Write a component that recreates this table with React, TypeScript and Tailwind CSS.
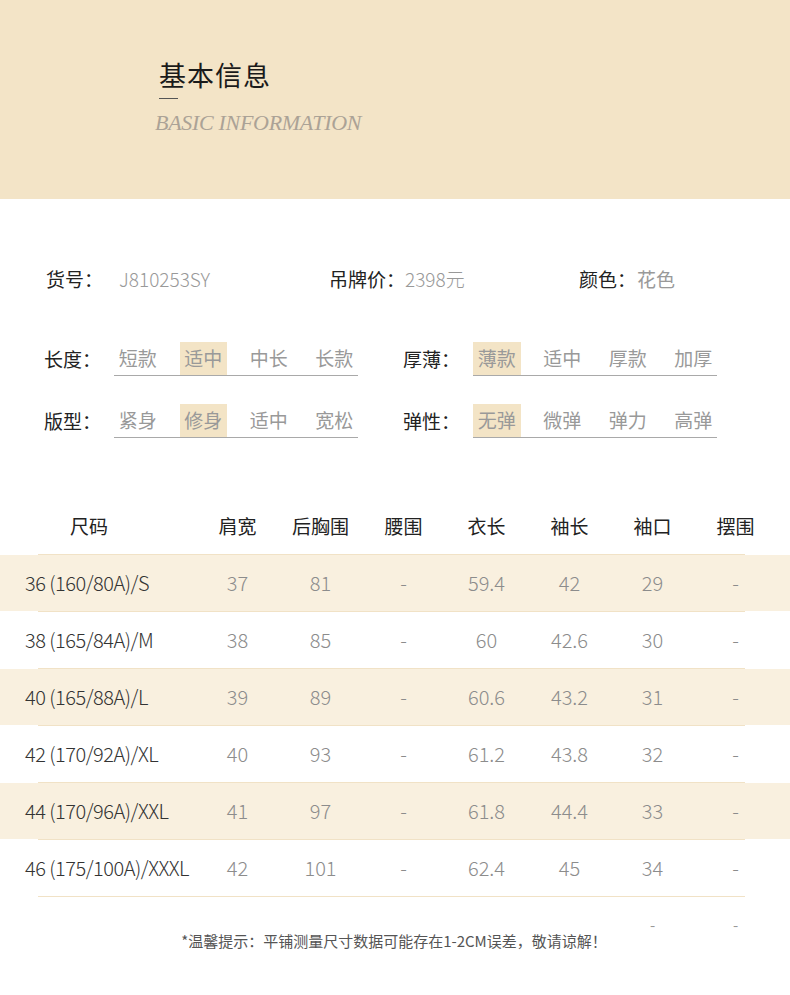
import React from 'react';

const FONT = "font-['Noto_Sans_CJK_SC','Noto_Sans',sans-serif]";

interface OptionGroup {
  label: string;
  options: string[];
  active: number;
}

const optionRows: OptionGroup[][] = [
  [
    { label: '长度：', options: ['短款', '适中', '中长', '长款'], active: 1 },
    { label: '厚薄：', options: ['薄款', '适中', '厚款', '加厚'], active: 0 },
  ],
  [
    { label: '版型：', options: ['紧身', '修身', '适中', '宽松'], active: 1 },
    { label: '弹性：', options: ['无弹', '微弹', '弹力', '高弹'], active: 0 },
  ],
];

const headers = ['肩宽', '后胸围', '腰围', '衣长', '袖长', '袖口', '摆围'];

const sizes: [string, string[]][] = [
  ['36 (160/80A)/S', ['37', '81', '-', '59.4', '42', '29', '-']],
  ['38 (165/84A)/M', ['38', '85', '-', '60', '42.6', '30', '-']],
  ['40 (165/88A)/L', ['39', '89', '-', '60.6', '43.2', '31', '-']],
  ['42 (170/92A)/XL', ['40', '93', '-', '61.2', '43.8', '32', '-']],
  ['44 (170/96A)/XXL', ['41', '97', '-', '61.8', '44.4', '33', '-']],
  ['46 (175/100A)/XXXL', ['42', '101', '-', '62.4', '45', '34', '-']],
];

function Group({ group, first }: { group: OptionGroup; first: boolean }) {
  return (
    <div className={`flex items-center ${first ? 'w-[359px]' : ''}`}>
      <div className="w-[70px] text-[19px] text-[#222]">{group.label}</div>
      <div className="flex gap-[18px] border-b border-[#a9a9a9] w-[244px]">
        {group.options.map((opt, i) => (
          <div
            key={opt}
            className={`w-[48px] h-[33px] flex items-center justify-center text-[19px] text-[#999] ${
              i === group.active ? 'bg-[#f3e4c6]' : ''
            }`}
          >
            {opt}
          </div>
        ))}
      </div>
    </div>
  );
}

export default function App() {
  return (
    <div className={`w-[790px] h-[995px] bg-white overflow-hidden ${FONT}`}>
      {/* title band */}
      <div className="h-[199px] bg-[#f3e4c7] pl-[159px] pt-[58px]">
        <div className="text-[27px] leading-[34px] text-[#1a1a1a] tracking-[1px]">基本信息</div>
        <div className="mt-[6px] w-[19px] h-px bg-[#555]" />
        <div className="mt-[12px] -ml-[4px] font-['Liberation_Serif',serif] italic text-[22px] leading-[24px] tracking-[-0.3px] text-[#aba296]">
          BASIC INFORMATION
        </div>
      </div>

      {/* basic info */}
      <div className="flex items-center h-[28px] mt-[66px] pl-[46px] text-[19px]">
        <div className="flex w-[283px]">
          <span className="w-[73px] text-[#222]">货号：</span>
          <span className="text-[#999] font-light">J810253SY</span>
        </div>
        <div className="flex w-[250px]">
          <span className="w-[76px] text-[#222]">吊牌价：</span>
          <span className="text-[#999] font-light">2398元</span>
        </div>
        <div className="flex">
          <span className="w-[58px] text-[#222]">颜色：</span>
          <span className="text-[#999]">花色</span>
        </div>
      </div>

      <div className="pl-[44px] mt-[49px] flex flex-col gap-[28px]">
        {optionRows.map((row, r) => (
          <div key={r} className="flex">
            {row.map((g, i) => (
              <Group key={g.label} group={g} first={i === 0} />
            ))}
          </div>
        ))}
      </div>

      {/* size table */}
      <div className="mt-[60px]">
        <div className="grid grid-cols-[196px_repeat(7,83px)] h-[56px] items-center text-[19px] text-[#222]">
          <div className="pl-[70px]">尺码</div>
          {headers.map((h) => (
            <div key={h} className="text-center">
              {h}
            </div>
          ))}
        </div>
        <div className="ml-[38px] w-[707px] h-px bg-[#f1e2c6]" />
        {sizes.map(([name, vals], i) => (
          <div key={name}>
            <div
              className={`grid grid-cols-[196px_repeat(7,83px)] h-[56px] items-center ${
                i % 2 === 0 ? 'bg-[#f9f0df]' : 'bg-white'
              }`}
            >
              <div className="pl-[25px] text-[20px] text-[#333] tracking-[-0.5px] font-light whitespace-nowrap">{name}</div>
              {vals.map((v, j) => (
                <div key={j} className="text-center text-[20px] text-[#8c8c8c] font-light">
                  {v}
                </div>
              ))}
            </div>
            <div className="ml-[38px] w-[707px] h-px bg-[#f1e2c6]" />
          </div>
        ))}

        <div className="grid grid-cols-[196px_repeat(7,83px)] h-[16px] mt-[19px] items-center text-[15px] leading-none text-[#999]">
          <div className="col-start-7 text-center">-</div>
          <div className="text-center">-</div>
        </div>
        <div className="text-center text-[15px] leading-[20px] text-[#555] mt-[-1px] pr-[2px]">
          *温馨提示：平铺测量尺寸数据可能存在1-2CM误差，敬请谅解！
        </div>
      </div>
    </div>
  );
}
